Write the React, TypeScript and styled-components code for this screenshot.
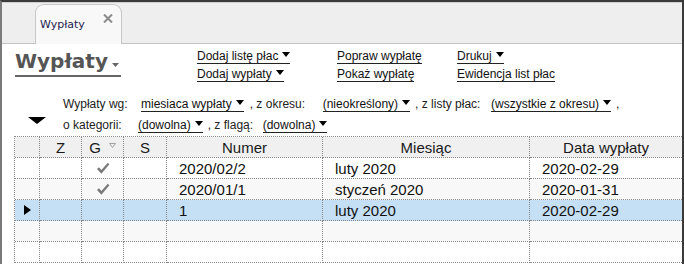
import React from "react";
import styled, { createGlobalStyle } from "styled-components";

const GlobalStyle = createGlobalStyle`
  html, body { margin: 0; padding: 0; background: #fff; }
  body { overflow: hidden; }
`;

const Frame = styled.div`
  width: 684px;
  height: 264px;
  box-sizing: border-box;
  border-top: 2px solid #3a3a3a;
  border-left: 2px solid #7a7a7a;
  border-right: 2px solid #3a3a3a;
  display: flex;
  flex-direction: column;
  overflow: hidden;
  background: #fff;
  font-family: "Liberation Sans", Arial, sans-serif;
`;

const TabBar = styled.div`
  flex: none;
  height: 41px;
  background: #eeeeee;
  border-bottom: 1px solid #c4c4c4;
  box-shadow: inset 0 1px 0 #cfcfcf;
  display: flex;
  align-items: flex-end;
  padding-left: 33px;
`;

const Tab = styled.div`
  box-sizing: border-box;
  width: 87px;
  height: 40px;
  margin-bottom: -1px;
  background: #f8f8f8;
  border: 1px solid #c6c6c6;
  border-bottom: none;
  border-radius: 9px 9px 0 0;
  display: flex;
  justify-content: space-between;
  align-items: flex-start;
  padding: 0 8px 0 4px;
`;

const TabLabel = styled.span`
  margin-top: 13px;
  font-family: "DejaVu Sans", sans-serif;
  font-size: 11px;
  line-height: 13px;
  color: #1e1e50;
`;

const CloseIcon = styled.svg`
  margin-top: 9px;
  flex: none;
`;

const Content = styled.div`
  flex: 1;
  display: flex;
  flex-direction: column;
  background: #fff;
`;

const Header = styled.div`
  display: flex;
  align-items: flex-start;
  padding: 5px 0 0 13px;
`;

const TitleBox = styled.div`
  flex: none;
  width: 182px;
`;

const Title = styled.div`
  display: inline-flex;
  align-items: flex-end;
  font-family: "DejaVu Sans", sans-serif;
  font-weight: bold;
  font-size: 20px;
  line-height: 24px;
  color: #555;
  padding-bottom: 2px;
  border-bottom: 2px solid #666;
  cursor: pointer;
`;

const TitleCaret = styled.svg`
  margin: 0 2px 6px 4px;
`;

const LinkGrid = styled.div`
  display: grid;
  grid-template-columns: 140px 120px auto;
  row-gap: 3px;
`;

const DropLink = styled.a`
  justify-self: start;
  display: inline-flex;
  align-items: center;
  flex: none;
  font-size: 12px;
  line-height: 14px;
  color: #111;
  text-decoration: none;
  border-bottom: 1px solid #222;
  white-space: nowrap;
  cursor: pointer;
`;

const SmallCaret = styled.svg`
  margin: 0 0 3px 4px;
`;

const Filters = styled.div`
  display: grid;
  grid-template-columns: 61px auto;
  margin-top: 15px;
`;

const BigTriangle = styled.svg`
  align-self: end;
  margin: 0 0 9px 26px;
`;

const FilterLines = styled.div`
  display: flex;
  flex-direction: column;
  gap: 6px;
`;

const FilterLine = styled.div`
  display: flex;
  align-items: flex-start;
  height: 15px;
`;

const FilterText = styled.span<{ $w?: number; $pl?: number }>`
  flex: none;
  box-sizing: border-box;
  width: ${(p) => (p.$w ? `${p.$w}px` : "auto")};
  padding-left: ${(p) => p.$pl ?? 0}px;
  font-size: 12px;
  line-height: 14px;
  color: #222;
  white-space: nowrap;
`;

const GridTable = styled.div`
  margin: 3px 0 0 12px;
  border-top: 1px dotted #888;
  border-left: 1px dotted #888;
  display: grid;
  grid-template-columns: 25px 42px 42px 43px 156px 207px 1fr;
  grid-auto-rows: 21px;
`;

const Cell = styled.div<{ $bg: string; $center?: boolean; $last?: boolean }>`
  box-sizing: border-box;
  background: ${(p) => p.$bg};
  border-bottom: 1px dotted #888;
  border-right: ${(p) => (p.$last ? "none" : "1px dotted #888")};
  display: flex;
  align-items: center;
  justify-content: ${(p) => (p.$center ? "center" : "flex-start")};
  padding-left: ${(p) => (p.$center ? 0 : 12)}px;
  font-size: 15px;
  line-height: 17px;
  color: #111;
  white-space: nowrap;
  overflow: hidden;
`;

const HeadCell = styled(Cell)`
  color: #1a1a1a;
  padding-top: 1px;
`;

const SortIcon = styled.svg`
  margin: 0 0 4px 8px;
`;

const Caret = () => (
  <SmallCaret width="8" height="5" viewBox="0 0 8 5">
    <polygon points="0,0 8,0 4,5" fill="#000" />
  </SmallCaret>
);

const Check = () => (
  <svg width="14" height="13" viewBox="0 0 14 13">
    <path d="M1 7 L3 5.2 L5.4 8 L11.8 0.8 L13.4 2.3 L5.4 11.8 Z" fill="#7a7a7a" />
  </svg>
);

const RowMarker = () => (
  <svg width="7" height="10" viewBox="0 0 7 10">
    <polygon points="0,0 7,5 0,10" fill="#000" />
  </svg>
);

type Row = { checked?: boolean; selected?: boolean; numer?: string; miesiac?: string; data?: string };

const rows: Row[] = [
  { checked: true, numer: "2020/02/2", miesiac: "luty 2020", data: "2020-02-29" },
  { checked: true, numer: "2020/01/1", miesiac: "styczeń 2020", data: "2020-01-31" },
  { selected: true, numer: "1", miesiac: "luty 2020", data: "2020-02-29" },
  {},
  {},
];

const rowBg = (r: Row, i: number) => (r.selected ? "#c5dff5" : i % 2 === 1 ? "#f8f8f8" : "#ffffff");

export default function App() {
  const hb = "#f0f0f0";
  return (
    <>
      <GlobalStyle />
      <Frame>
        <TabBar>
          <Tab>
            <TabLabel>Wypłaty</TabLabel>
            <CloseIcon width="10" height="9" viewBox="0 0 10 9">
              <path d="M1 0.5 L9 8.5 M9 0.5 L1 8.5" stroke="#8a8a8a" strokeWidth="2" />
            </CloseIcon>
          </Tab>
        </TabBar>
        <Content>
          <Header>
            <TitleBox>
              <Title>
                Wypłaty
                <TitleCaret width="7" height="4" viewBox="0 0 7 4">
                  <polygon points="0,0 7,0 3.5,4" fill="#666" />
                </TitleCaret>
              </Title>
            </TitleBox>
            <LinkGrid>
              <DropLink>Dodaj listę płac<Caret /></DropLink>
              <DropLink>Popraw wypłatę</DropLink>
              <DropLink>Drukuj<Caret /></DropLink>
              <DropLink>Dodaj wypłaty<Caret /></DropLink>
              <DropLink>Pokaż wypłatę</DropLink>
              <DropLink>Ewidencja list płac</DropLink>
            </LinkGrid>
          </Header>
          <Filters>
            <BigTriangle width="18" height="7" viewBox="0 0 18 7">
              <polygon points="0,0 18,0 9,7" fill="#000" />
            </BigTriangle>
            <FilterLines>
              <FilterLine>
                <FilterText $w={78}>Wypłaty wg:</FilterText>
                <DropLink>miesiaca wypłaty<Caret /></DropLink>
                <FilterText $w={79} $pl={6}>, z okresu:</FilterText>
                <DropLink>(nieokreślony)<Caret /></DropLink>
                <FilterText $w={81} $pl={5}>, z listy płac:</FilterText>
                <DropLink>(wszystkie z okresu)<Caret /></DropLink>
                <FilterText $pl={5}>,</FilterText>
              </FilterLine>
              <FilterLine>
                <FilterText $w={75}>o kategorii:</FilterText>
                <DropLink>(dowolna)<Caret /></DropLink>
                <FilterText $w={60} $pl={5}>, z flagą:</FilterText>
                <DropLink>(dowolna)<Caret /></DropLink>
              </FilterLine>
            </FilterLines>
          </Filters>
          <GridTable>
            <HeadCell $bg={hb} $center />
            <HeadCell $bg={hb} $center>Z</HeadCell>
            <HeadCell $bg={hb} $center>
              G
              <SortIcon width="7" height="5" viewBox="0 0 7 5">
                <polygon points="0.5,0.5 6.5,0.5 3.5,4.5" fill="none" stroke="#a0a0a0" strokeWidth="1" />
              </SortIcon>
            </HeadCell>
            <HeadCell $bg={hb} $center>S</HeadCell>
            <HeadCell $bg={hb} $center>Numer</HeadCell>
            <HeadCell $bg={hb} $center>Miesiąc</HeadCell>
            <HeadCell $bg={hb} $center $last>Data wypłaty</HeadCell>
            {rows.map((r, i) => {
              const bg = rowBg(r, i);
              return (
                <React.Fragment key={i}>
                  <Cell $bg={bg} $center>{r.selected && <RowMarker />}</Cell>
                  <Cell $bg={bg} $center />
                  <Cell $bg={bg} $center>{r.checked && <Check />}</Cell>
                  <Cell $bg={bg} $center />
                  <Cell $bg={bg}>{r.numer}</Cell>
                  <Cell $bg={bg}>{r.miesiac}</Cell>
                  <Cell $bg={bg} $last>{r.data}</Cell>
                </React.Fragment>
              );
            })}
          </GridTable>
        </Content>
      </Frame>
    </>
  );
}
